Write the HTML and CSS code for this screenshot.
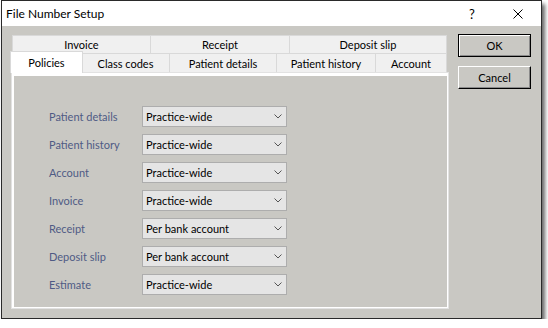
FILE: index.html
```html
<!DOCTYPE html>
<html>
<head>
  <title>File Number Setup</title>
  <link rel="stylesheet" href="styles.css">
</head>
<body>
  <div class="window">
    <div class="titlebar">
      <span class="title">File Number Setup</span>
      <span class="caption-btn help">?</span>
      <span class="caption-btn close">
        <svg width="10" height="10" viewBox="0 0 10 10"><path d="M0.5 0.5 L9.5 9.5 M9.5 0.5 L0.5 9.5" stroke="#000" stroke-width="1" fill="none"/></svg>
      </span>
    </div>

    <div class="client">
      <div class="tabs">
        <div class="tab-row row-back">
          <div class="tab">Invoice</div>
          <div class="tab">Receipt</div>
          <div class="tab">Deposit slip</div>
        </div>
        <div class="tab-row row-front">
          <div class="tab active">Policies</div>
          <div class="tab">Class codes</div>
          <div class="tab">Patient details</div>
          <div class="tab">Patient history</div>
          <div class="tab">Account</div>
        </div>
        <div class="page">
          <div class="page-inner">
            <div class="field"><span class="label">Patient details</span><div class="combo"><span>Practice-wide</span><svg width="8" height="5" viewBox="0 0 8 5"><path d="M0.5 0.5 L4 4 L7.5 0.5" stroke="#555" fill="none"/></svg></div></div>
            <div class="field"><span class="label">Patient history</span><div class="combo"><span>Practice-wide</span><svg width="8" height="5" viewBox="0 0 8 5"><path d="M0.5 0.5 L4 4 L7.5 0.5" stroke="#555" fill="none"/></svg></div></div>
            <div class="field"><span class="label">Account</span><div class="combo"><span>Practice-wide</span><svg width="8" height="5" viewBox="0 0 8 5"><path d="M0.5 0.5 L4 4 L7.5 0.5" stroke="#555" fill="none"/></svg></div></div>
            <div class="field"><span class="label">Invoice</span><div class="combo"><span>Practice-wide</span><svg width="8" height="5" viewBox="0 0 8 5"><path d="M0.5 0.5 L4 4 L7.5 0.5" stroke="#555" fill="none"/></svg></div></div>
            <div class="field"><span class="label">Receipt</span><div class="combo"><span>Per bank account</span><svg width="8" height="5" viewBox="0 0 8 5"><path d="M0.5 0.5 L4 4 L7.5 0.5" stroke="#555" fill="none"/></svg></div></div>
            <div class="field"><span class="label">Deposit slip</span><div class="combo"><span>Per bank account</span><svg width="8" height="5" viewBox="0 0 8 5"><path d="M0.5 0.5 L4 4 L7.5 0.5" stroke="#555" fill="none"/></svg></div></div>
            <div class="field"><span class="label">Estimate</span><div class="combo"><span>Practice-wide</span><svg width="8" height="5" viewBox="0 0 8 5"><path d="M0.5 0.5 L4 4 L7.5 0.5" stroke="#555" fill="none"/></svg></div></div>
          </div>
        </div>
      </div>

      <div class="buttons">
        <div class="btn default">OK</div>
        <div class="btn">Cancel</div>
      </div>
    </div>
  </div>
</body>
</html>
```

FILE: styles.css
```css
body {
  margin: 0;
  background: #fff;
  font-family: Lato, 'Liberation Sans', Arial, sans-serif;
  font-size: 11px;
  color: #000;
}
.window {
  margin-left: 1px;
  width: 541px;
  height: 319px;
  box-sizing: border-box;
  border: 1px solid #2a2a2a;
  background: #c9c8c3;
  box-shadow: 3px 4px 4px rgba(0, 0, 0, 0.6);
  display: flex;
  flex-direction: column;
}
.titlebar {
  height: 25px;
  background: #fff;
  display: flex;
  align-items: center;
  padding-left: 4px;
  font-size: 12px;
}
.title {
  flex: 1;
}
.caption-btn {
  width: 46px;
  height: 25px;
  display: flex;
  align-items: center;
  justify-content: center;
}
.help {
  font-size: 13px;
}
.client {
  display: flex;
  gap: 9px;
  padding: 9px 0 0 9px;
}
.tabs {
  width: 438px;
}
.tab-row {
  display: grid;
}
.row-back {
  grid-template-columns: 139px 139px 157px;
  height: 18px;
  margin-left: 1px;
}
.row-front {
  grid-template-columns: 71px 88px 107px 99px 71px;
  height: 19px;
}
.tab {
  background: #f0f0f0;
  border: 1px solid #d9d9d9;
  border-bottom: 0;
  display: flex;
  align-items: center;
  justify-content: center;
}
.tab + .tab {
  border-left: 0;
}
.tab.active {
  background: #fff;
  margin: -2px -1px -1px -1px;
  position: relative;
  z-index: 1;
}
.page {
  height: 237px;
  box-sizing: border-box;
  border: 1px solid #e2e2e2;
  background: #fff;
  padding: 3px 1px 1px 2px;
}
.page-inner {
  height: 100%;
  background: #c9c8c3;
  padding: 30px 0 0 35px;
  box-sizing: border-box;
  display: flex;
  flex-direction: column;
  gap: 7px;
}
.field {
  display: flex;
  align-items: center;
}
.label {
  width: 93px;
  color: #4f5b85;
}
.combo {
  width: 145px;
  height: 21px;
  box-sizing: border-box;
  border: 1px solid #adadad;
  background: #e5e5e5;
  display: flex;
  align-items: center;
  justify-content: space-between;
  padding: 0 4px 0 3px;
}
.buttons {
  display: flex;
  flex-direction: column;
  gap: 9px;
  margin-top: -1px;
}
.btn {
  width: 73px;
  height: 23px;
  box-sizing: border-box;
  display: flex;
  align-items: center;
  justify-content: center;
  background: #c9c8c3;
  border: 1px solid;
  border-color: #fff #000 #000 #fff;
  box-shadow: inset -1px -1px #8a8a8a;
}
.btn.default {
  border-color: #000;
  box-shadow: inset 1px 1px #fff, inset -1px -1px #8a8a8a;
}
```
